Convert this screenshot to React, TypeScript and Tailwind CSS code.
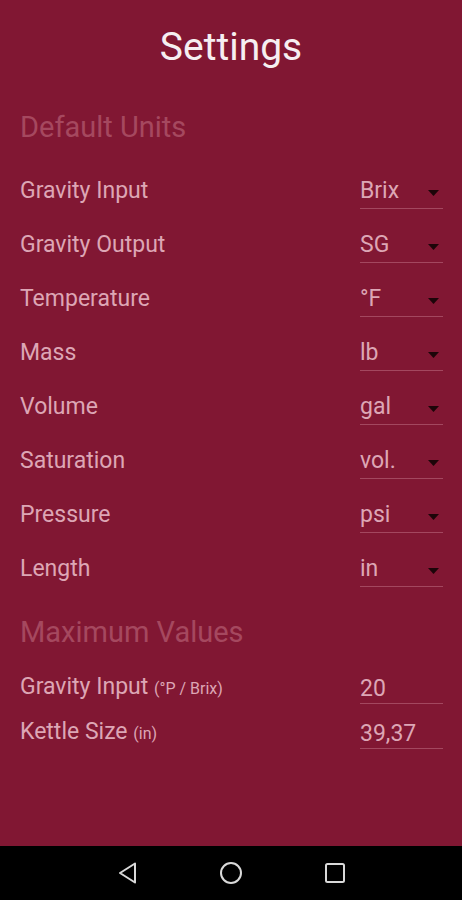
const unitRows = [
  { label: "Gravity Input", value: "Brix" },
  { label: "Gravity Output", value: "SG" },
  { label: "Temperature", value: "°F" },
  { label: "Mass", value: "lb" },
  { label: "Volume", value: "gal" },
  { label: "Saturation", value: "vol." },
  { label: "Pressure", value: "psi" },
  { label: "Length", value: "in" },
];

const maxRows = [
  { label: "Gravity Input", unit: "(°P / Brix)", value: "20" },
  { label: "Kettle Size", unit: "(in)", value: "39,37" },
];

export default function App() {
  return (
    <div className="h-screen flex flex-col bg-black font-['Roboto',sans-serif]">
      <main className="flex-1 bg-[#811733] px-5">
        <h1 className="pt-[25px] text-center text-[39px] leading-[44px] text-[#f6eef1]">
          Settings
        </h1>

        <h2 className="mt-[42px] text-[29px] leading-[33px] text-[#a5485f]">
          Default Units
        </h2>
        <div className="mt-[19px]">
          {unitRows.map((row) => (
            <SelectRow key={row.label} label={row.label} value={row.value} />
          ))}
        </div>

        <h2 className="mt-[21px] text-[29px] leading-[33px] text-[#a5485f]">
          Maximum Values
        </h2>
        <div className="mt-[10px]">
          {maxRows.map((row) => (
            <div key={row.label} className="h-[45px] flex items-end justify-between">
              <div className="pb-[2px] text-[23px] leading-[26px] text-[#dda6b5]">
                {row.label}{" "}
                <span className="text-[16px]">{row.unit}</span>
              </div>
              <div className="w-[83px] mr-[-1px] pb-[1px] border-b border-[#a3475f] text-[23px] leading-[26px] text-[#dda6b5]">
                {row.value}
              </div>
            </div>
          ))}
        </div>
      </main>

      <nav className="h-[54px] bg-black flex items-center justify-center gap-[81px]">
        <svg width="22" height="24" viewBox="0 0 22 24" fill="none">
          <path d="M19 2.5 L4 12 L19 21.5 Z" stroke="#d9d9d9" strokeWidth="2" strokeLinejoin="round" />
        </svg>
        <svg width="24" height="24" viewBox="0 0 24 24" fill="none">
          <circle cx="12" cy="12" r="10" stroke="#d9d9d9" strokeWidth="2" />
        </svg>
        <svg width="22" height="22" viewBox="0 0 22 22" fill="none">
          <rect x="2" y="2" width="18" height="18" rx="1.5" stroke="#d9d9d9" strokeWidth="2" />
        </svg>
      </nav>
    </div>
  );
}

function SelectRow({ label, value }: { label: string; value: string }) {
  return (
    <div className="h-[54px] flex items-start justify-between pt-[14px]">
      <div className="text-[23px] leading-[27px] text-[#dda6b5]">{label}</div>
      <div className="w-[83px] mr-[-1px] pb-[4px] border-b border-[#a3475f] flex items-center justify-between pr-[4px]">
        <span className="text-[23px] leading-[27px] text-[#dda6b5]">{value}</span>
        <svg width="11" height="6" viewBox="0 0 11 6" className="mt-[4px]">
          <path d="M0 0 H11 L5.5 6 Z" fill="#1c0509" />
        </svg>
      </div>
    </div>
  );
}
